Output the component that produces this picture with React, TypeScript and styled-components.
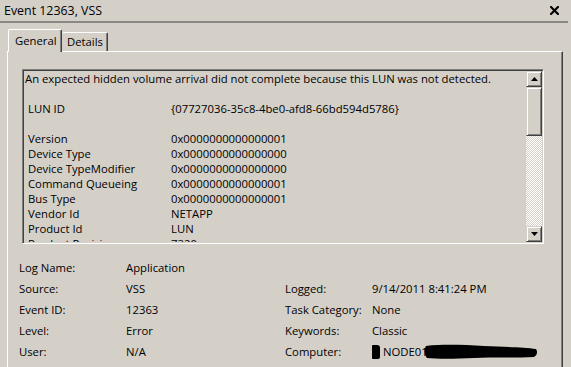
import React from "react";
import styled, { createGlobalStyle } from "styled-components";

const GlobalStyle = createGlobalStyle`
  html, body { margin: 0; padding: 0; background: #d4d0c8; }
  body {
    font-family: "Open Sans", "Noto Sans", sans-serif;
    font-size: 11.3px;
    color: #000;
  }
`;

const Window = styled.div`
  width: 571px;
  height: 367px;
  overflow: hidden;
  background: #d4d0c8;
  display: flex;
  flex-direction: column;
`;

const TitleBar = styled.div`
  width: 568px;
  height: 23px;
  box-sizing: border-box;
  border-bottom: 2px solid #8a8884;
  display: flex;
  align-items: center;
  justify-content: space-between;
  padding: 0 9px 0 4px;
`;

const TitleText = styled.span`
  font-size: 12.4px;
  line-height: 21px;
`;

const TabRow = styled.div`
  display: flex;
  align-items: flex-end;
  height: 22px;
  margin-top: 6px;
  padding-left: 8px;
  position: relative;
  z-index: 1;
`;

const Tab = styled.div<{ $active?: boolean }>`
  box-sizing: border-box;
  height: ${(p) => (p.$active ? "23px" : "19px")};
  margin-bottom: ${(p) => (p.$active ? "-1px" : "0")};
  padding: ${(p) => (p.$active ? "3px 6px 0 6px" : "1px 4px 0 5px")};
  background: #d4d0c8;
  border-top: 1px solid #ffffff;
  border-left: ${(p) => (p.$active ? "1px solid #ffffff" : "0")};
  border-right: 1px solid #404040;
  box-shadow: inset -1px 0 0 #808080;
  border-top-left-radius: 2px;
  border-top-right-radius: 2px;
  width: ${(p) => (p.$active ? "54px" : "46px")};
  line-height: 15px;
  white-space: nowrap;
`;

const Panel = styled.div`
  margin-left: 7px;
  width: 556px;
  flex: 1;
  box-sizing: border-box;
  border-top: 1px solid #ffffff;
  border-left: 1px solid #ffffff;
  border-right: 1px solid #404040;
  box-shadow: inset -1px 0 0 #808080;
  display: flex;
  flex-direction: column;
`;

const MessageBox = styled.div`
  margin: 17px 0 0 14px;
  width: 522px;
  height: 175px;
  box-sizing: border-box;
  border-top: 1px solid #808080;
  border-left: 1px solid #808080;
  border-right: 1px solid #ffffff;
  border-bottom: 1px solid #ffffff;
  box-shadow: inset 1px 1px 0 #404040, inset -1px -1px 0 #d4d0c8;
  padding: 1px;
  display: flex;
`;

const MessageText = styled.div`
  flex: 1;
  overflow: hidden;
  padding-left: 1px;
  line-height: 15px;
`;

const MsgLine = styled.div`
  height: 15px;
  white-space: nowrap;
`;

const FieldLine = styled.div`
  display: grid;
  grid-template-columns: 143px 1fr;
  height: 15px;
  white-space: nowrap;
  padding-left: 3px;
`;

const ScrollBar = styled.div`
  width: 16px;
  display: flex;
  flex-direction: column;
`;

const ScrollButton = styled.div`
  height: 16px;
  box-sizing: border-box;
  background: #d4d0c8;
  border-top: 1px solid #d4d0c8;
  border-left: 1px solid #d4d0c8;
  border-right: 1px solid #404040;
  border-bottom: 1px solid #404040;
  box-shadow: inset 1px 1px 0 #ffffff, inset -1px -1px 0 #808080;
  display: flex;
  align-items: center;
  justify-content: center;
`;

const Thumb = styled(ScrollButton)`
  height: 49px;
`;

const Track = styled.div`
  flex: 1;
  background-color: #ffffff;
  background-image: repeating-conic-gradient(#d4d0c8 0% 25%, #ffffff 0% 50%);
  background-size: 2px 2px;
`;

const InfoGrid = styled.div`
  margin: 13px 0 0 11px;
  display: grid;
  grid-template-columns: 107px 159px 87px 1fr;
  grid-auto-rows: 21px;
  align-items: center;
  line-height: 15px;
  white-space: nowrap;
`;

const Cell = styled.div`
  display: flex;
  align-items: center;
`;

const RedactBlock = styled.span`
  display: inline-block;
  width: 8px;
  height: 14px;
  background: #000;
  border-radius: 1px 3px 2px 1px;
  margin-right: 3px;
`;

const Arrow = ({ up }: { up?: boolean }) => (
  <svg width="7" height="4" viewBox="0 0 7 4">
    {up ? <polygon points="3.5,0 7,4 0,4" fill="#000" /> : <polygon points="0,0 7,0 3.5,4" fill="#000" />}
  </svg>
);

const CloseIcon = () => (
  <svg width="9" height="9" viewBox="0 0 9 9">
    <path d="M1 1 L8 8 M8 1 L1 8" stroke="#000" strokeWidth="2.2" strokeLinecap="square" />
  </svg>
);

const ScribbleSvg = styled.svg`
  margin-left: -7px;
  flex: none;
`;

const Scribble = () => (
  <ScribbleSvg width="114" height="17" viewBox="0 0 114 17">
    <path
      d="M2 3 C20 1 40 2 60 3 C80 4 100 4 112 6 C114 9 113 12 110 14 C90 15 70 14 50 15 C30 16 12 16 3 15 C0 12 0 6 2 3 Z"
      fill="#000"
    />
  </ScribbleSvg>
);

const fields: [string, string][] = [
  ["Version", "0x0000000000000001"],
  ["Device Type", "0x0000000000000000"],
  ["Device TypeModifier", "0x0000000000000000"],
  ["Command Queueing", "0x0000000000000001"],
  ["Bus Type", "0x0000000000000001"],
  ["Vendor Id", "NETAPP"],
  ["Product Id", "LUN"],
  ["Product Revision", "7320"],
];

export default function App() {
  return (
    <Window>
      <GlobalStyle />
      <TitleBar>
        <TitleText>Event 12363, VSS</TitleText>
        <CloseIcon />
      </TitleBar>
      <TabRow>
        <Tab $active>General</Tab>
        <Tab>Details</Tab>
      </TabRow>
      <Panel>
        <MessageBox>
          <MessageText>
            <MsgLine>An expected hidden volume arrival did not complete because this LUN was not detected.</MsgLine>
            <MsgLine />
            <FieldLine>
              <span>LUN ID</span>
              <span>{"{07727036-35c8-4be0-afd8-66bd594d5786}"}</span>
            </FieldLine>
            <MsgLine />
            {fields.map(([k, v]) => (
              <FieldLine key={k}>
                <span>{k}</span>
                <span>{v}</span>
              </FieldLine>
            ))}
          </MessageText>
          <ScrollBar>
            <ScrollButton>
              <Arrow up />
            </ScrollButton>
            <Thumb />
            <Track />
            <ScrollButton>
              <Arrow />
            </ScrollButton>
          </ScrollBar>
        </MessageBox>
        <InfoGrid>
          <Cell>Log Name:</Cell>
          <Cell>Application</Cell>
          <Cell />
          <Cell />
          <Cell>Source:</Cell>
          <Cell>VSS</Cell>
          <Cell>Logged:</Cell>
          <Cell>9/14/2011 8:41:24 PM</Cell>
          <Cell>Event ID:</Cell>
          <Cell>12363</Cell>
          <Cell>Task Category:</Cell>
          <Cell>None</Cell>
          <Cell>Level:</Cell>
          <Cell>Error</Cell>
          <Cell>Keywords:</Cell>
          <Cell>Classic</Cell>
          <Cell>User:</Cell>
          <Cell>N/A</Cell>
          <Cell>Computer:</Cell>
          <Cell>
            <RedactBlock />
            NODE01.
            <Scribble />
          </Cell>
        </InfoGrid>
      </Panel>
    </Window>
  );
}
